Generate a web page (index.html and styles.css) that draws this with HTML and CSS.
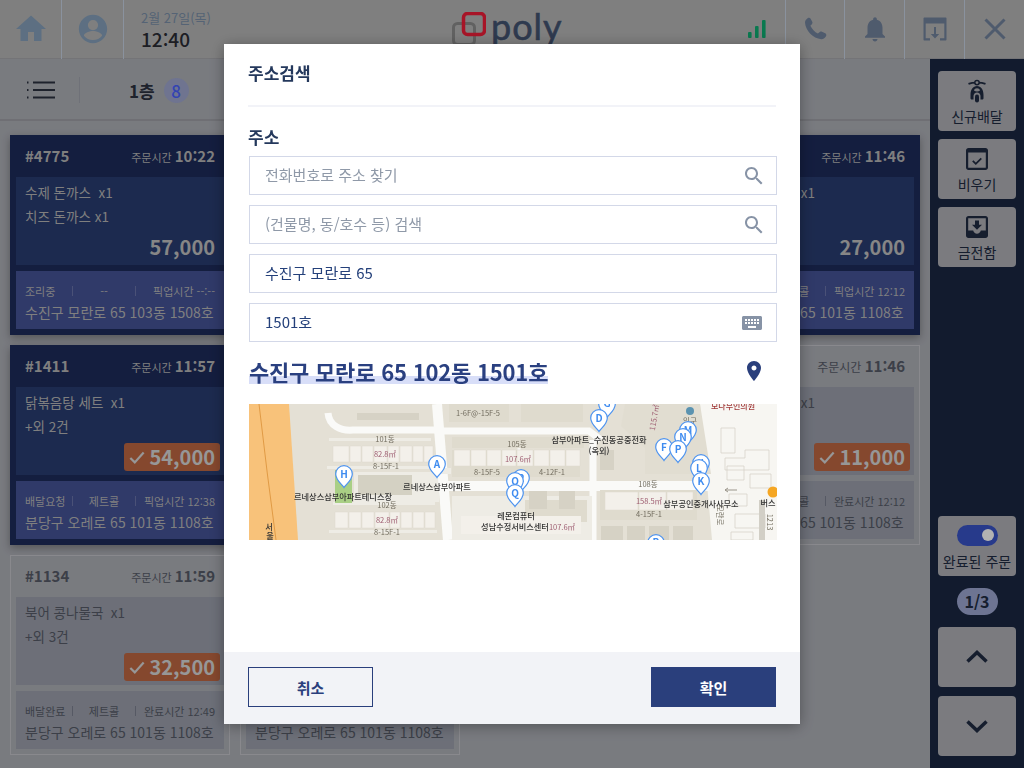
FILE: index.html
```html
<!DOCTYPE html>
<html lang="ko">
<head>
<meta charset="utf-8">
<title>주소검색</title>
<link rel="stylesheet" href="styles.css">
</head>
<body>
<div class="app">
  <header class="topbar">
    <div class="tb-cell tb-home"><svg class="ic28" viewBox="0 0 24 24"><path d="M10 20v-6h4v6h5v-8h3L12 3 2 12h3v8z"/></svg></div>
    <div class="tb-cell tb-user"><svg class="ic34" viewBox="0 0 24 24"><path d="M12 2C6.48 2 2 6.48 2 12s4.48 10 10 10 10-4.48 10-10S17.52 2 12 2zm0 3.6a3.6 3.6 0 1 1 0 7.2 3.6 3.6 0 0 1 0-7.2zm0 14.2c-2.6 0-4.9-1.2-6.4-3.1.03-2.1 4.27-3.3 6.4-3.3s6.37 1.2 6.4 3.3c-1.5 1.9-3.8 3.1-6.4 3.1z"/></svg></div>
    <div class="tb-date">
      <div class="date">2월 27일(목)</div>
      <div class="time">12:40</div>
    </div>
    <div class="logo">
      <svg class="logo-mark" viewBox="0 0 34 34"><rect x="1.5" y="11.5" width="21" height="21" rx="4" class="lm-gray"/><rect x="11.5" y="1.5" width="21" height="21" rx="4" class="lm-red"/></svg>
      <span class="logo-text">poly</span>
    </div>
    <div class="tb-space"></div>
    <svg class="signal" viewBox="0 0 18 18"><rect x="0" y="12" width="3.6" height="6" rx="1"/><rect x="7" y="6" width="3.6" height="12" rx="1"/><rect x="14" y="0" width="3.6" height="18" rx="1"/></svg>
    <div class="tb-cell tb-right tb-first"><svg class="ic30" viewBox="0 0 24 24"><path d="M6.3 3.2c.8-.5 1.8-.3 2.2.5l1.3 2.5c.3.6.2 1.4-.3 1.9L8.300 9.300c1.200 2.600 3.500 5 6 6.300l1.500-1.200c.5-.4 1.200-.5 1.800-.2l2.600 1.200c.8.4 1.100 1.400.7 2.200-.8 1.600-2.300 2.800-4 2.600C10.400 19.500 4.500 13.400 4 7c-.1-1.600 1-3 2.300-3.800z"/></svg></div>
    <div class="tb-cell tb-right"><svg class="ic30" viewBox="0 0 24 24"><path d="M12 22c1.100 0 2-.9 2-2h-4c0 1.100.89 2 2 2zm6-6v-5c0-3.070-1.640-5.640-4.500-6.320V4c0-.83-.67-1.500-1.500-1.500s-1.500.67-1.500 1.500v.68C7.630 5.360 6 7.920 6 11v5l-2 2v1h16v-1l-2-2z"/></svg></div>
    <div class="tb-cell tb-right"><svg class="ic30" viewBox="0 0 30 30"><path d="M4.500 3.500h21c.6 0 1 .4 1 1v21c0 .6-.4 1-1 1h-5.500v-2.200h4.300V9.500H5.700v14.800H10v2.200H4.500c-.6 0-1-.4-1-1v-21c0-.6.4-1 1-1z"/><path d="M14 13h2v7h3.200L15 24.500 10.800 20H14z"/></svg></div>
    <div class="tb-cell tb-right"><svg class="ic30" viewBox="0 0 30 30"><path d="M5.500 5.500l19 19M24.500 5.500l-19 19" class="x-line"/></svg></div>
  </header>

  <div class="main">
    <div class="content">
      <div class="toolbar">
        <svg class="menu-ic" viewBox="0 0 28 18"><path d="M6 1.500h22M6 9h22M6 16.500h22" class="menu-line"/><path d="M0 1.500h1.500M0 9h1.500M0 16.500h1.500" class="menu-dot"/></svg>
        <span class="tool-div"></span>
        <span class="floor">1층</span>
        <span class="floor-count">8</span>
      </div>

      <div class="cards">
        <article class="card dark">
          <div class="c-head"><b class="no">#4775</b><span class="ordered">주문시간 <b>10:22</b></span></div>
          <div class="c-menu"><p>수제 돈까스 &nbsp;x1</p><p>치즈 돈까스 x1</p><div class="price-row"><span class="price">57,000</span></div></div>
          <div class="c-info"><div class="status"><span>조리중</span><i></i><span class="mid">--</span><i></i><span class="end">픽업시간 --:--</span></div><div class="addr">수진구 모란로 65 103동 1508호</div></div>
        </article>
        <article class="card dark">
          <div class="c-head"><b class="no">#4776</b><span class="ordered">주문시간 <b>10:40</b></span></div>
          <div class="c-menu"><p>수제 돈까스 &nbsp;x1</p><div class="price-row"><span class="price">27,000</span></div></div>
          <div class="c-info"><div class="status"><span>조리중</span><i></i><span class="mid">--</span><i></i><span class="end">픽업시간 --:--</span></div><div class="addr">수진구 모란로 65 103동 1508호</div></div>
        </article>
        <article class="card dark">
          <div class="c-head"><b class="no">#4777</b><span class="ordered">주문시간 <b>11:02</b></span></div>
          <div class="c-menu"><p>치즈 돈까스 x1</p><div class="price-row"><span class="price">27,000</span></div></div>
          <div class="c-info"><div class="status"><span>조리중</span><i></i><span class="mid">--</span><i></i><span class="end">픽업시간 --:--</span></div><div class="addr">수진구 모란로 65 103동 1508호</div></div>
        </article>
        <article class="card dark">
          <div class="c-head"><b class="no">#4778</b><span class="ordered">주문시간 <b>11:46</b></span></div>
          <div class="c-menu"><p>수제 돈까스 <span class="qty-far">x1</span></p><div class="price-row"><span class="price">27,000</span></div></div>
          <div class="c-info"><div class="status"><span>배달요청</span><i></i><span class="mid">제트콜</span><i></i><span class="end">픽업시간 12:12</span></div><div class="addr">분당구 오레로 65 101동 1108호</div></div>
        </article>

        <article class="card dark">
          <div class="c-head"><b class="no">#1411</b><span class="ordered">주문시간 <b>11:57</b></span></div>
          <div class="c-menu"><p>닭볶음탕 세트 &nbsp;x1</p><p>+외 2건</p><div class="price-row"><span class="price paid"><svg class="chk" viewBox="0 0 18 14"><path d="M1.500 7.500l5 5L16.500 1.500"/></svg>54,000</span></div></div>
          <div class="c-info"><div class="status"><span>배달요청</span><i></i><span class="mid">제트콜</span><i></i><span class="end">픽업시간 12:38</span></div><div class="addr">분당구 오레로 65 101동 1108호</div></div>
        </article>
        <article class="card light">
          <div class="c-head"><b class="no">#1412</b><span class="ordered">주문시간 <b>11:50</b></span></div>
          <div class="c-menu"><p>북어 콩나물국 &nbsp;x1</p><div class="price-row"><span class="price paid"><svg class="chk" viewBox="0 0 18 14"><path d="M1.500 7.500l5 5L16.500 1.500"/></svg>11,000</span></div></div>
          <div class="c-info"><div class="status"><span>배달완료</span><i></i><span class="mid">제트콜</span><i></i><span class="end">완료시간 12:12</span></div><div class="addr">분당구 오레로 65 101동 1108호</div></div>
        </article>
        <article class="card light">
          <div class="c-head"><b class="no">#1413</b><span class="ordered">주문시간 <b>11:52</b></span></div>
          <div class="c-menu"><p>북어 콩나물국 &nbsp;x1</p><div class="price-row"><span class="price paid"><svg class="chk" viewBox="0 0 18 14"><path d="M1.500 7.500l5 5L16.500 1.500"/></svg>11,000</span></div></div>
          <div class="c-info"><div class="status"><span>배달완료</span><i></i><span class="mid">제트콜</span><i></i><span class="end">완료시간 12:12</span></div><div class="addr">분당구 오레로 65 101동 1108호</div></div>
        </article>
        <article class="card light">
          <div class="c-head"><b class="no">#1414</b><span class="ordered ordered-lg">주문시간 <b>11:46</b></span></div>
          <div class="c-menu"><p>수제 돈까스 <span class="qty-far">x1</span></p><div class="price-row"><span class="price paid"><svg class="chk" viewBox="0 0 18 14"><path d="M1.500 7.500l5 5L16.500 1.500"/></svg>11,000</span></div></div>
          <div class="c-info"><div class="status"><span>배달완료</span><i></i><span class="mid">제트콜</span><i></i><span class="end">완료시간 12:12</span></div><div class="addr">분당구 오레로 65 101동 1108호</div></div>
        </article>

        <article class="card light">
          <div class="c-head"><b class="no">#1134</b><span class="ordered">주문시간 <b>11:59</b></span></div>
          <div class="c-menu"><p>북어 콩나물국 &nbsp;x1</p><p>+외 3건</p><div class="price-row"><span class="price paid"><svg class="chk" viewBox="0 0 18 14"><path d="M1.500 7.500l5 5L16.500 1.500"/></svg>32,500</span></div></div>
          <div class="c-info"><div class="status"><span>배달완료</span><i></i><span class="mid">제트콜</span><i></i><span class="end">완료시간 12:49</span></div><div class="addr">분당구 오레로 65 101동 1108호</div></div>
        </article>
        <article class="card light">
          <div class="c-head"><b class="no">#1135</b><span class="ordered">주문시간 <b>11:59</b></span></div>
          <div class="c-menu"><p>북어 콩나물국 &nbsp;x1</p><div class="price-row"><span class="price paid"><svg class="chk" viewBox="0 0 18 14"><path d="M1.500 7.500l5 5L16.500 1.500"/></svg>11,000</span></div></div>
          <div class="c-info"><div class="status"><span>배달완료</span><i></i><span class="mid">제트콜</span><i></i><span class="end">완료시간 12:49</span></div><div class="addr">분당구 오레로 65 101동 1108호</div></div>
        </article>
      </div>
    </div>

    <aside class="side">
      <button class="s-btn"><svg class="s-ic" viewBox="0 0 24 24"><path d="M3.500 4.800c2.500-1 5-1.200 8.500-1.200s6 .2 8.500 1.200" class="s-stroke"/><circle cx="12" cy="3.600" r="2.200" class="s-ring"/><path fill-rule="evenodd" d="M5.500 16c0-5.500 2.500-9 6.500-9s6.500 3.500 6.500 9v3.200c0 .8-.6 1.300-1.300 1.300h-1.700v-3.500c0-1.900-1.500-3.500-3.500-3.500s-3.500 1.600-3.500 3.500v3.500H6.800c-.7 0-1.300-.5-1.300-1.300zM9 11.500c.8.6 1.800.9 3 .9s2.200-.3 3-.9c-.3-1.400-1.500-2.200-3-2.200s-2.700.8-3 2.200z"/><rect x="10" y="15.500" width="4" height="8" rx="2"/></svg><span>신규배달</span></button>
      <button class="s-btn"><svg class="s-ic" viewBox="0 0 24 24"><path fill-rule="evenodd" d="M3.500 1h17C21.900 1 23 2.100 23 3.500v17c0 1.400-1.100 2.500-2.500 2.500h-17C2.100 23 1 21.900 1 20.500v-17C1 2.100 2.100 1 3.500 1zM3.200 5.500v15c0 .2.100.3.300.3h17c.2 0 .3-.1.300-.3v-15z"/><path d="M7.800 13.800l3 3 5.500-5.500" class="s-stroke"/></svg><span>비우기</span></button>
      <button class="s-btn"><svg class="s-ic" viewBox="0 0 24 24"><path fill-rule="evenodd" d="M3.500 1h17C21.900 1 23 2.100 23 3.500v17c0 1.400-1.100 2.500-2.500 2.500h-17C2.100 23 1 21.900 1 20.500v-17C1 2.100 2.100 1 3.500 1zM3.200 3.200v12.300h5c.4 1.900 2 3.200 3.800 3.200s3.400-1.300 3.800-3.200h5V3.200zM10 5.500h4v4.200h3L12 14.700 7 9.700h3z"/></svg><span>금전함</span></button>
      <div class="side-gap"></div>
      <button class="s-btn"><span class="toggle"><span class="knob"></span></span><span class="s-nowrap">완료된 주문</span></button>
      <div class="pager">1/3</div>
      <button class="s-btn s-arrow"><svg class="arrow-ic" viewBox="0 0 24 14"><path d="M2.500 11.500L12 2.500l9.500 9"/></svg></button>
      <button class="s-btn s-arrow s-down"><svg class="arrow-ic" viewBox="0 0 24 14"><path d="M2.500 2.500L12 11.500l9.500-9"/></svg></button>
    </aside>
  </div>
</div>

<div class="overlay"></div>

<section class="modal">
  <h1 class="m-title">주소검색</h1>
  <div class="m-body">
    <div class="m-label">주소</div>
    <div class="field"><span class="ph">전화번호로 주소 찾기</span><svg class="f-ic" viewBox="0 0 24 24"><path d="M15.500 14h-.79l-.28-.27C15.410 12.590 16 11.110 16 9.500 16 5.910 13.090 3 9.500 3S3 5.910 3 9.500 5.910 16 9.500 16c1.610 0 3.090-.59 4.230-1.570l.27.28v.79l5 4.990L20.490 19l-4.990-5zm-6 0C7.010 14 5 11.990 5 9.500S7.010 5 9.500 5 14 7.010 14 9.500 11.990 14 9.500 14z"/></svg></div>
    <div class="field"><span class="ph">(건물명, 동/호수 등) 검색</span><svg class="f-ic" viewBox="0 0 24 24"><path d="M15.500 14h-.79l-.28-.27C15.410 12.590 16 11.110 16 9.500 16 5.910 13.090 3 9.500 3S3 5.910 3 9.500 5.910 16 9.500 16c1.610 0 3.090-.59 4.230-1.570l.27.28v.79l5 4.990L20.490 19l-4.990-5zm-6 0C7.010 14 5 11.990 5 9.500S7.010 5 9.500 5 14 7.010 14 9.500 11.990 14 9.500 14z"/></svg></div>
    <div class="field"><span class="val">수진구 모란로 65</span></div>
    <div class="field"><span class="val">1501호</span><svg class="f-ic f-kbd" viewBox="0 0 24 24"><path d="M20.500 5h-17C2.700 5 2 5.700 2 6.500v11c0 .8.7 1.500 1.500 1.500h17c.8 0 1.500-.7 1.500-1.500v-11c0-.8-.7-1.500-1.500-1.500zM11 8h2v2h-2V8zm0 3h2v2h-2v-2zM8 8h2v2H8V8zm0 3h2v2H8v-2zm-1 2H5v-2h2v2zm0-3H5V8h2v2zm9 7H8v-2h8v2zm0-4h-2v-2h2v2zm0-3h-2V8h2v2zm3 3h-2v-2h2v2zm0-3h-2V8h2v2z"/></svg></div>
    <div class="result">
      <span class="result-text">수진구 모란로 65 102동 1501호</span>
      <svg class="pin-ic" viewBox="0 0 24 24"><path d="M12 2C8.130 2 5 5.130 5 9c0 5.250 7 13 7 13s7-7.750 7-13c0-3.870-3.130-7-7-7zm0 9.500c-1.380 0-2.500-1.120-2.500-2.500s1.120-2.500 2.500-2.500 2.500 1.120 2.500 2.500-1.120 2.500-2.500 2.500z"/></svg>
    </div>
    <svg class="map" viewBox="0 0 528 136">
      <defs>
        <g id="mp"><path d="M0 13.500C-1.500 10.800-8.300 6.500-8.300 0A8.300 8.300 0 0 1 8.300 0C8.300 6.500 1.500 10.800 0 13.500z" class="mp-b"/></g>
      </defs>
      <rect x="0" y="0" width="528" height="136" class="m-ground"/>
      <path d="M451 0L528 0V136H463z" class="m-east"/>
      <path d="M0 0H40L49 136H0z" class="m-high"/>
      <path d="M10 0Q18 70 27 136" class="m-high-line"/>

      <rect x="200" y="0" width="60" height="18" class="m-tan"/><rect x="272" y="0" width="62" height="18" class="m-tan"/>
      <rect x="108" y="9" width="62" height="7" class="m-tan2"/>
      <rect x="80" y="34" width="102" height="3" class="m-pale"/>
      <rect x="78" y="62" width="108" height="3" class="m-pale"/>
      <rect x="84" y="98" width="102" height="3" class="m-pale"/>
      <rect x="80" y="126" width="108" height="3" class="m-pale"/>
      <rect x="86" y="66" width="17" height="33" class="m-green"/>
      <rect x="105" y="68" width="85" height="30" class="m-pale"/>
      <rect x="109" y="71" width="54" height="20" class="m-court"/>

      <g class="m-bld">
        <path d="M84 42h16v16h-16zM101 42h11v16h-11zM113 42h11v16h-11zM125 42h13v16h-13zM139 42h11v16h-11zM151 42h12v16h-12zM164 42h10v16h-10zM175 42h9v16h-9z"/>
        <path d="M86 108h13v16h-13zM100 108h12v16h-12zM113 108h12v16h-12zM126 108h14v16h-14zM141 108h10v16h-10zM152 108h11v16h-11zM164 108h11v16h-11zM176 108h10v16h-10z"/>
      </g>

      <path d="M79 9C80 22 92 27 104 26H188" class="m-road"/>
      <path d="M188 0L199 136" class="m-road-w"/>
      <path d="M188 27H340L352 36" class="m-road"/>
      <path d="M196 82H460" class="m-road-w"/>
      <path d="M344 36V136" class="m-road"/>
      <path d="M270 40V82" class="m-road-n"/>
      <path d="M392 30L462 78" class="m-road-n"/>

      <rect x="203" y="33" width="132" height="11" class="m-tan"/>
      <rect x="203" y="46" width="128" height="27" class="m-tan"/>
      <g class="m-bld">
        <path d="M205 46h16v16h-16zM222 46h15v16h-15zM238 46h14v16h-14zM253 46h14v16h-14zM268 46h16v16h-16zM285 46h15v16h-15zM301 46h15v16h-15zM317 46h14v16h-14z"/>
      </g>
      <rect x="203" y="92" width="140" height="44" class="m-pale"/>
      <rect x="276" y="96" width="62" height="22" class="m-tan"/>
      <rect x="212" y="112" width="120" height="18" class="m-bld-r"/>
      <path d="M280 87h18v18h-18zM310 87h16v18h-16z" class="m-tan2"/>
      <rect x="351" y="86" width="97" height="30" class="m-tan"/>
      <path d="M356 88h33v18h-33zM390 88h27v18h-27zM418 88h26v18h-26z" class="m-cream"/>
      <path d="M352 122h22v14h-22zM378 122h18v14h-18zM400 122h20v14h-20zM424 122h20v14h-20z" class="m-tan2"/>
      <path d="M376 0L451 0L462 70H396V44L372 22z" class="m-plaza"/>
      <path d="M351 46h14v20h-14z" class="m-tan2"/>
      <path d="M188 64h14v6h-14z" class="m-pale"/>

      <g class="m-out">
        <path d="M472 24h14v25h-14zM476 54h20v-8h24v20H476zM478 62h17v14h-17zM501 70h21v14h-21zM480 90h18v12h-18zM486 110h30v14h-30zM482 128h22v8h-22z"/>
      </g>
      <path d="M476 86h12M476 86l3-2M476 86l3 2" class="m-arrow"/>
      <path d="M513 96V136" class="m-dash"/>

      <circle cx="441" cy="7" r="4" class="m-entry"/>
      <circle cx="524" cy="88" r="5.500" class="m-bus"/>

      <g class="mt-g">
        <text x="229" y="12">1-6F@-15F-5</text>
        <text x="136" y="38">101동</text>
        <text x="137" y="65">8-15F-1</text>
        <text x="138" y="104">102동</text>
        <text x="138" y="131">8-15F-1</text>
        <text x="268" y="43">105동</text>
        <text x="238" y="71">8-15F-5</text>
        <text x="303" y="71">4-12F-1</text>
        <text x="399" y="83">108동</text>
        <text x="400" y="113">4-15F-1</text>
        <text x="441" y="20">입구</text>
        <text x="468" y="111" transform="rotate(90 468 111)">모란로</text>
        <text x="518" y="118" transform="rotate(90 518 118)">1213</text>
      </g>
      <g class="mt-r">
        <text x="136" y="53">82.8㎡</text>
        <text x="138" y="119">82.8㎡</text>
        <text x="269" y="58">107.6㎡</text>
        <text x="313" y="126">107.6㎡</text>
        <text x="400" y="100">158.5㎡</text>
        <text x="408" y="14" transform="rotate(-80 408 14)">115.7㎡</text>
      </g>
      <g class="mt-k">
        <text x="94" y="96">르네상스삼부아파트테니스장</text>
        <text x="188" y="86">르네상스삼부아파트</text>
        <text x="267" y="115">레몬컴퓨터</text>
        <text x="266" y="126">성남수정서비스센터</text>
        <text x="350" y="39">삼부아파트_수진동공중전화</text>
        <text x="350" y="50">(옥외)</text>
        <text x="452" y="103">삼부공인중개사사무소</text>
        <text x="519" y="102">버스</text>
        <text x="20" y="126">서</text>
        <text x="21" y="135">울</text>
      </g>
      <text x="484" y="5" class="mt-hosp">모다부인의원</text>

      <g class="mp-set">
        <use href="#mp" x="358" y="0"/><text x="358" y="3">G</text>
        <use href="#mp" x="350" y="14"/><text x="350" y="17.500">D</text>
        <use href="#mp" x="439" y="26"/><text x="439" y="29.500">M</text>
        <use href="#mp" x="434" y="33"/><text x="434" y="36.500">N</text>
        <use href="#mp" x="415" y="43"/><text x="415" y="46.500">F</text>
        <use href="#mp" x="429" y="45"/><text x="429" y="48.500">P</text>
        <use href="#mp" x="452" y="59"/><text x="452" y="62.500">J</text>
        <use href="#mp" x="450" y="64"/><text x="450" y="67.500">L</text>
        <use href="#mp" x="452" y="77"/><text x="452" y="80.500">K</text>
        <use href="#mp" x="272" y="74"/><text x="272" y="77.500">R</text>
        <use href="#mp" x="266" y="77"/><text x="266" y="80.500">O</text>
        <use href="#mp" x="266" y="89"/><text x="266" y="92.500">Q</text>
        <use href="#mp" x="188" y="60"/><text x="188" y="63.500">A</text>
        <use href="#mp" x="95" y="70"/><text x="95" y="73.500">H</text>
        <use href="#mp" x="407" y="139"/><text x="407" y="142">B</text>
      </g>
    </svg>
  </div>
  <footer class="m-foot">
    <button class="btn btn-line">취소</button>
    <button class="btn btn-solid">확인</button>
  </footer>
</section>
</body>
</html>
```

FILE: styles.css
```css
* { box-sizing: border-box; }
html, body { margin: 0; padding: 0; }
body {
  width: 1024px;
  height: 768px;
  overflow: hidden;
  font-family: "Noto Sans CJK KR", "Noto Sans", sans-serif;
  background: #aeb0b7;
  color: #2b313f;
}
p { margin: 0; }

.app { display: flex; flex-direction: column; height: 768px; }

/* top bar */
.topbar {
  display: flex;
  align-items: center;
  height: 59px;
  background: #b7b7b7;
  flex: none;
  border-bottom: 1px solid #a6a6ab;
}
.tb-cell {
  display: flex;
  align-items: center;
  justify-content: center;
  height: 59px;
}
.tb-home, .tb-user { width: 62px; border-right: 1px solid #c6d2e2; fill: #86a0ba; }
.tb-right { width: 60px; border-left: 1px solid #c6d2e2; fill: #72839d; }
.tb-first { width: 59px; }
.ic28 { width: 36px; height: 36px; }
.ic34 { width: 34px; height: 34px; }
.ic30 { width: 30px; height: 30px; }
.x-line { fill: none; stroke: #72839d; stroke-width: 3; }
.tb-date { width: 120px; padding-left: 17px; }
.date { font-size: 13px; line-height: 16px; color: #7a8fa8; margin-top: 3px; }
.time { font-size: 19px; line-height: 26px; color: #2a2c34; font-weight: 500; }
.logo {
  display: flex;
  align-items: flex-start;
  height: 59px;
  margin-left: 208px;
  flex: none;
}
.logo-mark { width: 34px; height: 34px; margin-top: 12px; flex: none; }
.lm-gray { fill: none; stroke: #8c8c8c; stroke-width: 3; }
.lm-red { fill: none; stroke: #f01e39; stroke-width: 3.500; }
.logo-text {
  font-family: "Lato", sans-serif;
  font-size: 36px;
  line-height: 38px;
  letter-spacing: 1px;
  -webkit-text-stroke: .6px #435371;
  color: #435371;
  margin: 7px 0 0 5px;
}
.tb-space { flex: 1; }
.signal { width: 18px; height: 18px; fill: #0eae72; margin-right: 19px; flex: none; }

/* main */
.main { flex: 1; display: flex; min-height: 0; }
.content { width: 930px; background: #aeb0b7; }
.toolbar {
  display: flex;
  align-items: center;
  height: 62px;
  border-bottom: 2px solid #9fa0a7;
  padding: 2px 0 0 27px;
}
.menu-ic { width: 28px; height: 18px; flex: none; }
.menu-line, .menu-dot { fill: none; stroke: #2b313f; stroke-width: 2; }
.tool-div { width: 1px; height: 26px; background: #9fa3ac; margin-left: 24px; }
.floor { font-size: 17px; font-weight: 700; color: #2b313f; margin-left: 49px; }
.floor-count {
  width: 25px;
  height: 25px;
  border-radius: 50%;
  background: #9fa7ce;
  color: #4961ff;
  font-size: 17px;
  font-weight: 500;
  text-align: center;
  line-height: 25px;
  margin-left: 9px;
}

.cards {
  display: grid;
  grid-template-columns: repeat(4, 220px);
  grid-auto-rows: 200px;
  gap: 10px;
  padding: 14px 0 0 10px;
}
.card { padding: 0 6px 6px; display: flex; flex-direction: column; }
.card.dark { background: #1d2b5b; box-shadow: 0 3px 8px rgba(0,0,0,.3); color: #b7b7b7; }
.card.light { border: 1px solid #c5c5cb; padding: 0 5px 5px; color: #565b67; }
.c-head {
  display: flex;
  align-items: center;
  justify-content: space-between;
  height: 42px;
  padding: 0 9px 2px;
  flex: none;
}
.card.light .c-head { height: 41px; }
.no { font-size: 15px; font-weight: 700; }
.ordered { font-size: 11px; }
.ordered b { font-size: 15px; font-weight: 700; }
.ordered-lg { font-size: 12px; }
.c-menu {
  position: relative;
  height: 88px;
  padding: 3px 9px 0;
  flex: none;
  font-size: 13.500px;
  line-height: 24px;
  white-space: nowrap;
}
.qty-far { margin-left: 16px; }
.card.dark .c-menu { background: #293d71; }
.card.light .c-menu { background: #9ca0ad; }
.price-row { position: absolute; right: 4px; bottom: 4px; }
.price {
  display: flex;
  align-items: center;
  height: 28px;
  padding: 0 5px;
  font-size: 20px;
  line-height: 28px;
  font-weight: 700;
  border-radius: 3px;
}
.card.dark .price { color: #c0c0c0; }
.card .price.paid { background: #bf6743; color: #d8d8d8; }
.chk { width: 16px; height: 13px; margin-right: 4px; fill: none; stroke: #d8d8d8; stroke-width: 2.500; }
.c-info {
  height: 58px;
  margin-top: 6px;
  padding: 12px 9px 0;
  flex: none;
}
.card.dark .c-info { background: #455397; }
.card.light .c-info { background: #9ca0ad; }
.status {
  display: grid;
  grid-template-columns: 47px 1px 62px 1px 1fr;
  align-items: center;
  font-size: 11px;
  line-height: 16px;
  white-space: nowrap;
}
.status i { display: block; width: 1px; height: 10px; background: rgba(255,255,255,.2); }
.card.light .status i { background: #7c8090; }
.status .mid { text-align: center; }
.status .end { text-align: right; }
.addr { font-size: 14px; line-height: 24px; white-space: nowrap; margin-top: 1px; }

/* sidebar */
.side {
  width: 94px;
  background: #1a2842;
  padding: 12px 8px;
  display: flex;
  flex-direction: column;
  align-items: center;
  flex: none;
}
.s-btn {
  width: 78px;
  height: 60px;
  border: 0;
  border-radius: 4px;
  background: #b0b1b7;
  padding: 2px 0 0;
  margin: 0 0 8px;
  display: flex;
  flex-direction: column;
  align-items: center;
  justify-content: center;
  font-family: inherit;
  font-size: 14px;
  line-height: 20px;
  color: #202b42;
  flex: none;
}
.s-ic { width: 24px; height: 24px; fill: #202b42; margin-bottom: 3px; }
.s-stroke { fill: none; stroke: #202b42; stroke-width: 1.800; }
.s-ring { fill: #b0b1b7; stroke: #202b42; stroke-width: 1.500; }
.side-gap { flex: 1; }
.toggle {
  display: block;
  position: relative;
  width: 41px;
  height: 21px;
  border-radius: 11px;
  background: #3953c8;
  margin: 1px 0 5px;
}
.knob {
  position: absolute;
  right: 4px;
  top: 4.500px;
  width: 12px;
  height: 12px;
  border-radius: 50%;
  background: #fff;
}
.s-nowrap { white-space: nowrap; }
.pager {
  width: 41px;
  height: 27px;
  border-radius: 14px;
  background: #9da7d1;
  color: #202b42;
  font-size: 16px;
  font-weight: 700;
  line-height: 27px;
  text-align: center;
  margin: 4px 0 12px;
  flex: none;
}
.s-arrow { margin-bottom: 9px; padding-top: 0; }
.s-down { margin-bottom: 0; }
.arrow-ic { width: 24px; height: 14px; fill: none; stroke: #202b42; stroke-width: 3.500; }

/* overlay and modal */
.overlay { position: fixed; inset: 0; background: rgba(0,0,0,.3); }
.modal {
  position: fixed;
  left: 224px;
  top: 44px;
  width: 576px;
  height: 680px;
  background: #fff;
  display: flex;
  flex-direction: column;
  box-shadow: 0 2px 14px rgba(0,0,0,.35);
}
.m-title {
  margin: 0 24px;
  height: 63px;
  flex: none;
  border-bottom: 2px solid #f2f3f8;
  font-size: 17px;
  font-weight: 700;
  line-height: 58px;
  color: #24385c;
}
.m-body { flex: 1; padding: 17px 23px 0 25px; min-height: 0; }
.m-label { font-size: 17px; font-weight: 700; line-height: 25px; height: 32px; margin-left: -1px; color: #24385c; }
.field {
  display: flex;
  align-items: center;
  justify-content: space-between;
  height: 39px;
  margin-bottom: 10px;
  padding: 0 10px 0 15px;
  border: 1px solid #d3d8e8;
  background: #fff;
}
.ph, .val { font-size: 15px; padding-bottom: 2px; }
.ph { color: #8f99a8; }
.val { color: #24407a; }
.f-ic { width: 24px; height: 24px; fill: #8793a6; flex: none; }
.f-kbd { margin-right: 2px; }
.result {
  display: flex;
  align-items: center;
  justify-content: space-between;
  height: 44px;
  margin-top: -3px;
  padding-right: 11px;
}
.result-text {
  font-size: 22px;
  letter-spacing: -.2px;
  font-weight: 700;
  line-height: 30px;
  color: #2a4080;
  background: linear-gradient(transparent 20px, #d8def8 20px, #d8def8 28px, transparent 28px);
}
.pin-ic { width: 24px; height: 24px; fill: #2a3f7c; }
.map { display: block; width: 528px; height: 136px; margin-top: 11px; filter: blur(.3px); }
.m-foot {
  height: 72px;
  flex: none;
  background: #f2f3f7;
  display: flex;
  justify-content: space-between;
  padding: 15px 24px 0;
}
.btn {
  width: 125px;
  height: 40px;
  font-family: inherit;
  font-size: 15px;
  font-weight: 700;
  border: 1px solid #2a3f7c;
  padding: 0;
}
.btn-line { background: transparent; color: #2a3f7c; }
.btn-solid { background: #2a3f7c; color: #fff; }

/* map drawing */
.m-ground { fill: #e4e0d5; }
.m-east { fill: #f7f6f2; }
.m-high { fill: #f8c27a; }
.m-high-line { fill: none; stroke: #e09a45; stroke-width: 1; }
.m-tan { fill: #dfdbce; }
.m-tan2 { fill: #d6d2c5; }
.m-pale { fill: #eeece5; }
.m-green { fill: #a9cf85; }
.m-court { fill: #d4d1c3; }
.m-bld path { fill: #f3f0ea; stroke: #dcd8cc; stroke-width: .5; }
.m-bld-r { fill: #f3f0ea; }
.m-cream { fill: #f3f0ea; stroke: #dcd8cc; stroke-width: .5; }
.m-road { fill: none; stroke: #fafaf8; stroke-width: 7; }
.m-road-w { fill: none; stroke: #fafaf8; stroke-width: 10; }
.m-road-n { fill: none; stroke: #f5f4f0; stroke-width: 3; }
.m-plaza { fill: #e1ddd1; }
.m-out path { fill: #f7f6f2; stroke: #d2cfc6; stroke-width: .7; }
.m-arrow { fill: none; stroke: #9a958a; stroke-width: 1; }
.m-dash { stroke: #d2cfc6; stroke-width: 6; fill: none; }
.m-entry { fill: #5b93b0; }
.m-bus { fill: #f5a623; }
.map text { text-anchor: middle; }
.mt-g text { font-size: 7.500px; fill: #716c5e; }
.mt-r text { font-size: 7.500px; fill: #9d5c70; }
.mt-k text { font-size: 8.200px; fill: #333; font-weight: 500; }
.mt-hosp { font-size: 8px; fill: #a03838; font-weight: 500; }
.mp-b { fill: #fff; stroke: #4d93ef; stroke-width: 1.200; }
.mp-set text { font-size: 10px; font-weight: 700; fill: #3f8cf0; }
```
